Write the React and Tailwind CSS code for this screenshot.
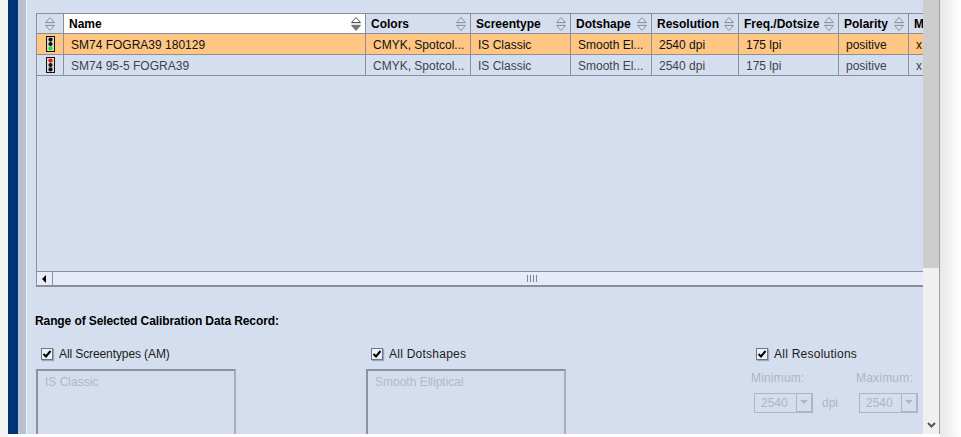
import React from 'react'

const columns = [
  { name: 'Colors', width: 'w-[105px]' },
  { name: 'Screentype', width: 'w-[100px]' },
  { name: 'Dotshape', width: 'w-[81px]' },
  { name: 'Resolution', width: 'w-[87px]' },
  { name: 'Freq./Dotsize', width: 'w-[100px]' },
  { name: 'Polarity', width: 'w-[70px]' },
]

const rows = [
  { name: 'SM74 FOGRA39 180129', cells: ['CMYK, Spotcol...', 'IS Classic', 'Smooth El...', '2540 dpi', '175 lpi', 'positive'], selected: true },
  { name: 'SM74 95-5 FOGRA39', cells: ['CMYK, Spotcol...', 'IS Classic', 'Smooth El...', '2540 dpi', '175 lpi', 'positive'], selected: false },
]

const SortIcon = ({ active }) => (
  <svg width="10" height="14" viewBox="0 0 10 14" className="shrink-0">
    <path d="M5 .5 L9.5 5.5 H.5 Z" fill="none" stroke={active ? '#555' : '#8f959c'} />
    <path d="M5 13.5 L9.5 8.5 H.5 Z" fill={active ? '#777' : 'none'} stroke={active ? '#777' : '#8f959c'} />
    <path d="M.5 7 H9.5" stroke="#c4c9d0" />
  </svg>
)

const TrafficLight = ({ go }) => (
  <svg width="9" height="16" viewBox="0 0 9 16">
    <rect x=".5" y=".5" width="8" height="15" fill="#d8d8d0" stroke="#111" />
    <circle cx="4.5" cy="3.6" r="2.1" fill={go ? '#111' : '#f01010'} />
    <circle cx="4.5" cy="8" r="2.1" fill="#111" />
    <circle cx="4.5" cy="12.4" r="2.1" fill={go ? '#22e01e' : '#111'} />
  </svg>
)

const Check = ({ label, className }) => (
  <div className="flex items-center gap-[6px] h-[16px]">
    <div className="w-[12px] h-[12px] bg-[#eef1f8] border border-[#6d7688] shadow-[1px_1px_1px_#9aa6bc] flex items-center justify-center">
      <svg width="10" height="10" viewBox="0 0 10 10">
        <path d="M1.5 5 L4 7.5 L8.5 2" fill="none" stroke="#000" strokeWidth="2" />
      </svg>
    </div>
    <span className={`text-[12px] text-[#1b1b1b] whitespace-nowrap ${className}`}>{label}</span>
  </div>
)

const ListBox = ({ text }) => (
  <div className="w-[200px] h-[66px] border-2 border-[#8e929a] border-r-[#a9adb5] border-b-0 pl-[7px] pt-[2px] text-[12px] text-[#b2b8c4] whitespace-nowrap">
    {text}
  </div>
)

const Combo = () => (
  <div className="w-[59px] h-[20px] border border-[#aeb5c3] flex text-[12px] text-[#aeb5c3]">
    <div className="flex-1 flex items-center pl-[6px]">2540</div>
    <div className="w-[16px] border-l border-[#aeb5c3] border-r border-b flex items-center justify-center">
      <svg width="8" height="5" viewBox="0 0 8 5"><path d="M0 0 H8 L4 4 Z" fill="#aeb5c3" /></svg>
    </div>
  </div>
)

export default function App() {
  return (
    <div className="w-[961px] h-[437px] overflow-hidden flex bg-white font-['Liberation_Sans',Arial,sans-serif]">
      <div className="w-[8px] bg-[#f4f4f4]" />
      <div className="w-[10px] h-[434px] bg-[#003478]" />
      <div className="w-[8px] h-[434px] bg-[#b7c1d2]" />
      <div className="w-px h-[434px] bg-[#eef1f8]" />

      {/* main panel */}
      <div className="w-[896px] h-[434px] bg-[#d5deee] overflow-hidden pt-[13px] pl-[9px]">
        {/* table */}
        <div className="w-[887px] h-[274px] border-l border-b-2 border-[#8b9098] flex flex-col">
          <div className="h-[21px] shrink-0 flex border-t border-b border-[#8b9098]">
            <div className="w-[27px] shrink-0 border-r border-[#8b9098] flex items-center justify-center">
              <SortIcon />
            </div>
            <div className="w-[302px] shrink-0 bg-white border-r border-[#8b9098] flex items-center justify-between pl-[5px] pr-[4px]">
              <span className="text-[12px] font-bold text-black">Name</span>
              <SortIcon active />
            </div>
            {columns.map((col) => (
              <div key={col.name} className={`${col.width} shrink-0 border-r border-[#8b9098] flex items-center justify-between pl-[5px] pr-[4px]`}>
                <span className="text-[12px] font-bold text-black whitespace-nowrap">{col.name}</span>
                <SortIcon />
              </div>
            ))}
            <div className="flex-1 pl-[5px] flex items-center overflow-hidden">
              <span className="text-[12px] font-bold text-black">M</span>
            </div>
          </div>

          {rows.map((row) => (
            <div key={row.name} className={`h-[21px] shrink-0 flex border-b border-[#8b9098] text-[12px] whitespace-nowrap ${row.selected ? 'bg-[#fec682] text-[#111]' : 'text-[#3c4450]'}`}>
              <div className="w-[27px] shrink-0 border-r border-[#8b9098] flex items-center justify-center">
                <TrafficLight go={row.selected} />
              </div>
              <div className="w-[302px] shrink-0 border-r border-[#8b9098] flex items-center pl-[7px] pt-px">{row.name}</div>
              {row.cells.map((cell, i) => (
                <div key={i} className={`${columns[i].width} shrink-0 border-r border-[#8b9098] flex items-center pl-[7px] pt-px`}>{cell}</div>
              ))}
              <div className="flex-1 pl-[7px] pt-px flex items-center">x</div>
            </div>
          ))}

          {/* horizontal scroll bar */}
          <div className="mt-auto h-[14px] border-t border-[#8b9098] bg-[#e6ebf7] flex items-center">
            <div className="w-[16px] h-full border-r border-[#8b9098] flex items-center justify-center">
              <svg width="5" height="8" viewBox="0 0 5 8"><path d="M4 0 V8 L0 4 Z" fill="#000" /></svg>
            </div>
            <div className="flex-1 flex justify-center gap-[2px] pl-[88px]">
              <div className="w-px h-[7px] bg-[#7f8896]" />
              <div className="w-px h-[7px] bg-[#7f8896]" />
              <div className="w-px h-[7px] bg-[#7f8896]" />
              <div className="w-px h-[7px] bg-[#7f8896]" />
            </div>
          </div>
        </div>

        <div className="mt-[25px] -ml-px text-[12px] font-bold text-black tracking-[-.1px]">Range of Selected Calibration Data Record:</div>

        <div className="mt-[16px] flex">
          <div className="w-[330px] flex flex-col">
            <div className="pl-[5px]"><Check label="All Screentypes (AM)" className="tracking-[-.1px]" /></div>
            <div className="mt-[7px]"><ListBox text="IS Classic" /></div>
          </div>
          <div className="w-[385px] flex flex-col">
            <div className="pl-[5px]"><Check label="All Dotshapes" className="tracking-[.25px]" /></div>
            <div className="mt-[7px]"><ListBox text="Smooth Elliptical" /></div>
          </div>
          <div className="flex-1 flex flex-col">
            <div className="pl-[5px]"><Check label="All Resolutions" className="tracking-[.25px]" /></div>
            <div className="mt-[7px] flex text-[12px] text-[#aeb5c3] tracking-[.2px]">
              <span className="w-[105px]">Minimum:</span>
              <span>Maximum:</span>
            </div>
            <div className="mt-[6px] ml-[3px] flex items-center">
              <Combo />
              <span className="ml-[9px] w-[37px] text-[12px] text-[#aeb5c3]">dpi</span>
              <Combo />
            </div>
          </div>
        </div>
      </div>

      {/* vertical scroll bar */}
      <div className="w-[16px] h-[434px] bg-[#f0f0f0] flex flex-col items-center">
        <div className="w-full h-[268px] bg-[#cdcdcd]" />
        <div className="mt-auto mb-[5px]">
          <svg width="9" height="7" viewBox="0 0 9 7"><path d="M1 1 L4.5 4.5 L8 1" fill="none" stroke="#555" strokeWidth="2" /></svg>
        </div>
      </div>
      <div className="w-px h-[434px] bg-[#a0a0a0]" />
      <div className="flex-1 bg-gradient-to-r from-[#e8e8e8] to-white" />
    </div>
  )
}
